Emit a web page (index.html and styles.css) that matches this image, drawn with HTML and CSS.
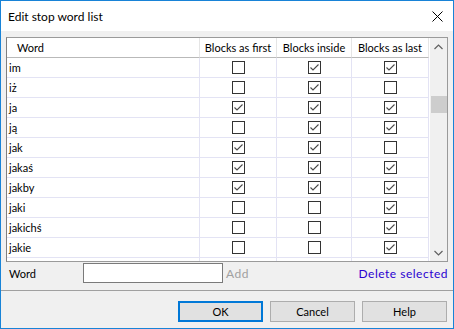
FILE: index.html
```html
<!DOCTYPE html>
<html lang="pl">
<head>
  <meta charset="UTF-8" />
  <title>Edit stop word list</title>
  <link rel="stylesheet" href="styles.css">
</head>
<body>
  <div class="window">
    <div class="titlebar">
      <span class="title">Edit stop word list</span>
      <svg class="close" width="11" height="11" viewBox="0 0 11 11">
        <path d="M0.5 0.5 L10.5 10.5 M10.5 0.5 L0.5 10.5" stroke="#000" stroke-width="1" fill="none"/>
      </svg>
    </div>

    <div class="panel">
      <div class="grid">
        <div class="grid-main">
          <div class="row head">
            <div class="cell word">Word</div>
            <div class="cell c1">Blocks as first</div>
            <div class="cell c2">Blocks inside</div>
            <div class="cell c3">Blocks as last</div>
          </div>
          <div class="rows" id="rows"></div>
          <div class="row">
            <div class="cell word"></div>
            <div class="cell c1"></div>
            <div class="cell c2"></div>
            <div class="cell c3"></div>
          </div>
        </div>
        <div class="scrollbar">
          <div class="sb-btn">
            <svg width="9" height="6" viewBox="0 0 9 6"><path d="M0.5 5 L4.5 1 L8.5 5" stroke="#606060" stroke-width="1.2" fill="none"/></svg>
          </div>
          <div class="sb-track"><div class="sb-thumb"></div></div>
          <div class="sb-btn">
            <svg width="9" height="6" viewBox="0 0 9 6"><path d="M0.5 1 L4.5 5 L8.5 1" stroke="#606060" stroke-width="1.2" fill="none"/></svg>
          </div>
        </div>
      </div>

      <div class="word-row">
        <span class="label">Word</span>
        <input class="word-input" type="text">
        <span class="add">Add</span>
        <span class="delete">Delete selected</span>
      </div>
    </div>

    <div class="footer">
      <button class="btn default">OK</button>
      <button class="btn">Cancel</button>
      <button class="btn">Help</button>
    </div>
  </div>

  <script>
    var words = [
      ['im', 0, 1, 1],
      ['iż', 0, 1, 0],
      ['ja', 1, 1, 1],
      ['ją', 0, 1, 1],
      ['jak', 1, 1, 0],
      ['jakaś', 1, 1, 1],
      ['jakby', 1, 1, 1],
      ['jaki', 0, 0, 1],
      ['jakichś', 0, 0, 1],
      ['jakie', 0, 0, 1]
    ];
    var check = '<svg width="11" height="11" viewBox="0 0 11 11"><path d="M1.5 5.5 L4 8 L9.5 2.5" stroke="#4a4a4a" stroke-width="1.1" fill="none"/></svg>';
    var html = '';
    words.forEach(function (w) {
      html += '<div class="row"><div class="cell word">' + w[0] + '</div>';
      for (var i = 1; i <= 3; i++) {
        html += '<div class="cell c' + i + '"><span class="cb">' + (w[i] ? check : '') + '</span></div>';
      }
      html += '</div>';
    });
    document.getElementById('rows').innerHTML = html;
  </script>
</body>
</html>
```

FILE: styles.css
```css
* {
  box-sizing: border-box;
}

body {
  margin: 0;
  font-family: "Segoe UI", Lato, "Noto Sans", sans-serif;
  font-size: 11px;
  color: #000;
}

.window {
  width: 454px;
  height: 329px;
  border: 1px solid #1883d7;
  background: #f0f0f0;
  display: flex;
  flex-direction: column;
}

.titlebar {
  height: 30px;
  background: #fff;
  display: flex;
  align-items: center;
  justify-content: space-between;
  padding: 0 10px 0 7px;
}

.title {
  font-size: 12px;
}

.close {
  display: block;
}

.panel {
  padding: 6px 5px 7px 5px;
  border-bottom: 1px solid #a0a0a0;
}

.grid {
  display: flex;
  height: 225px;
  border: 1px solid #9a9a9a;
  border-left-color: #7f7f7f;
  background: #fff;
}

.grid-main {
  flex: 1;
  overflow: hidden;
}

.row {
  display: flex;
  height: 20px;
}

.cell {
  border-right: 1px solid #e3e3f4;
  border-bottom: 1px solid #e3e3f4;
  display: flex;
  align-items: center;
  justify-content: center;
}

.cell.word {
  width: 193px;
  justify-content: flex-start;
  padding-left: 2px;
}

.c1, .c3 {
  width: 77px;
}

.c2 {
  width: 75px;
}

.head .cell {
  border-bottom-color: #b9b9b9;
  border-right-color: #e5e5e5;
}

.head .cell.word {
  padding-left: 10px;
}

.cb {
  width: 13px;
  height: 13px;
  border: 1px solid #333;
  background: #fff;
}

.cb svg {
  display: block;
}

.scrollbar {
  width: 17px;
  background: #f0f0f0;
  display: flex;
  flex-direction: column;
}

.sb-btn {
  height: 17px;
  display: flex;
  align-items: center;
  justify-content: center;
}

.sb-track {
  flex: 1;
  padding: 41px 0 0 1px;
}

.sb-thumb {
  height: 17px;
  background: #cdcdcd;
}

.word-row {
  display: flex;
  align-items: center;
  height: 20px;
  margin-top: 1px;
  padding-left: 3px;
}

.label {
  width: 74px;
}

.word-input {
  width: 140px;
  height: 20px;
  border: 1px solid #7a7a7a;
  background: #fff;
  margin: 0;
  padding: 0 3px;
  font: inherit;
}

.add {
  margin-left: 3px;
  font-size: 12px;
  letter-spacing: 0.5px;
  color: #a0a0a0;
}

.delete {
  margin-left: auto;
  font-size: 12px;
  letter-spacing: 0.5px;
  color: #2a00d0;
}

.footer {
  flex: 1;
  display: flex;
  justify-content: flex-end;
  align-items: flex-start;
  gap: 7px;
  padding: 10px 6px 0 0;
}

.btn {
  width: 85px;
  height: 21px;
  margin: 0;
  border: 1px solid #adadad;
  background: #e1e1e1;
  font: inherit;
  color: #000;
  padding: 0;
}

.btn.default {
  border: 2px solid #0078d7;
}
```
